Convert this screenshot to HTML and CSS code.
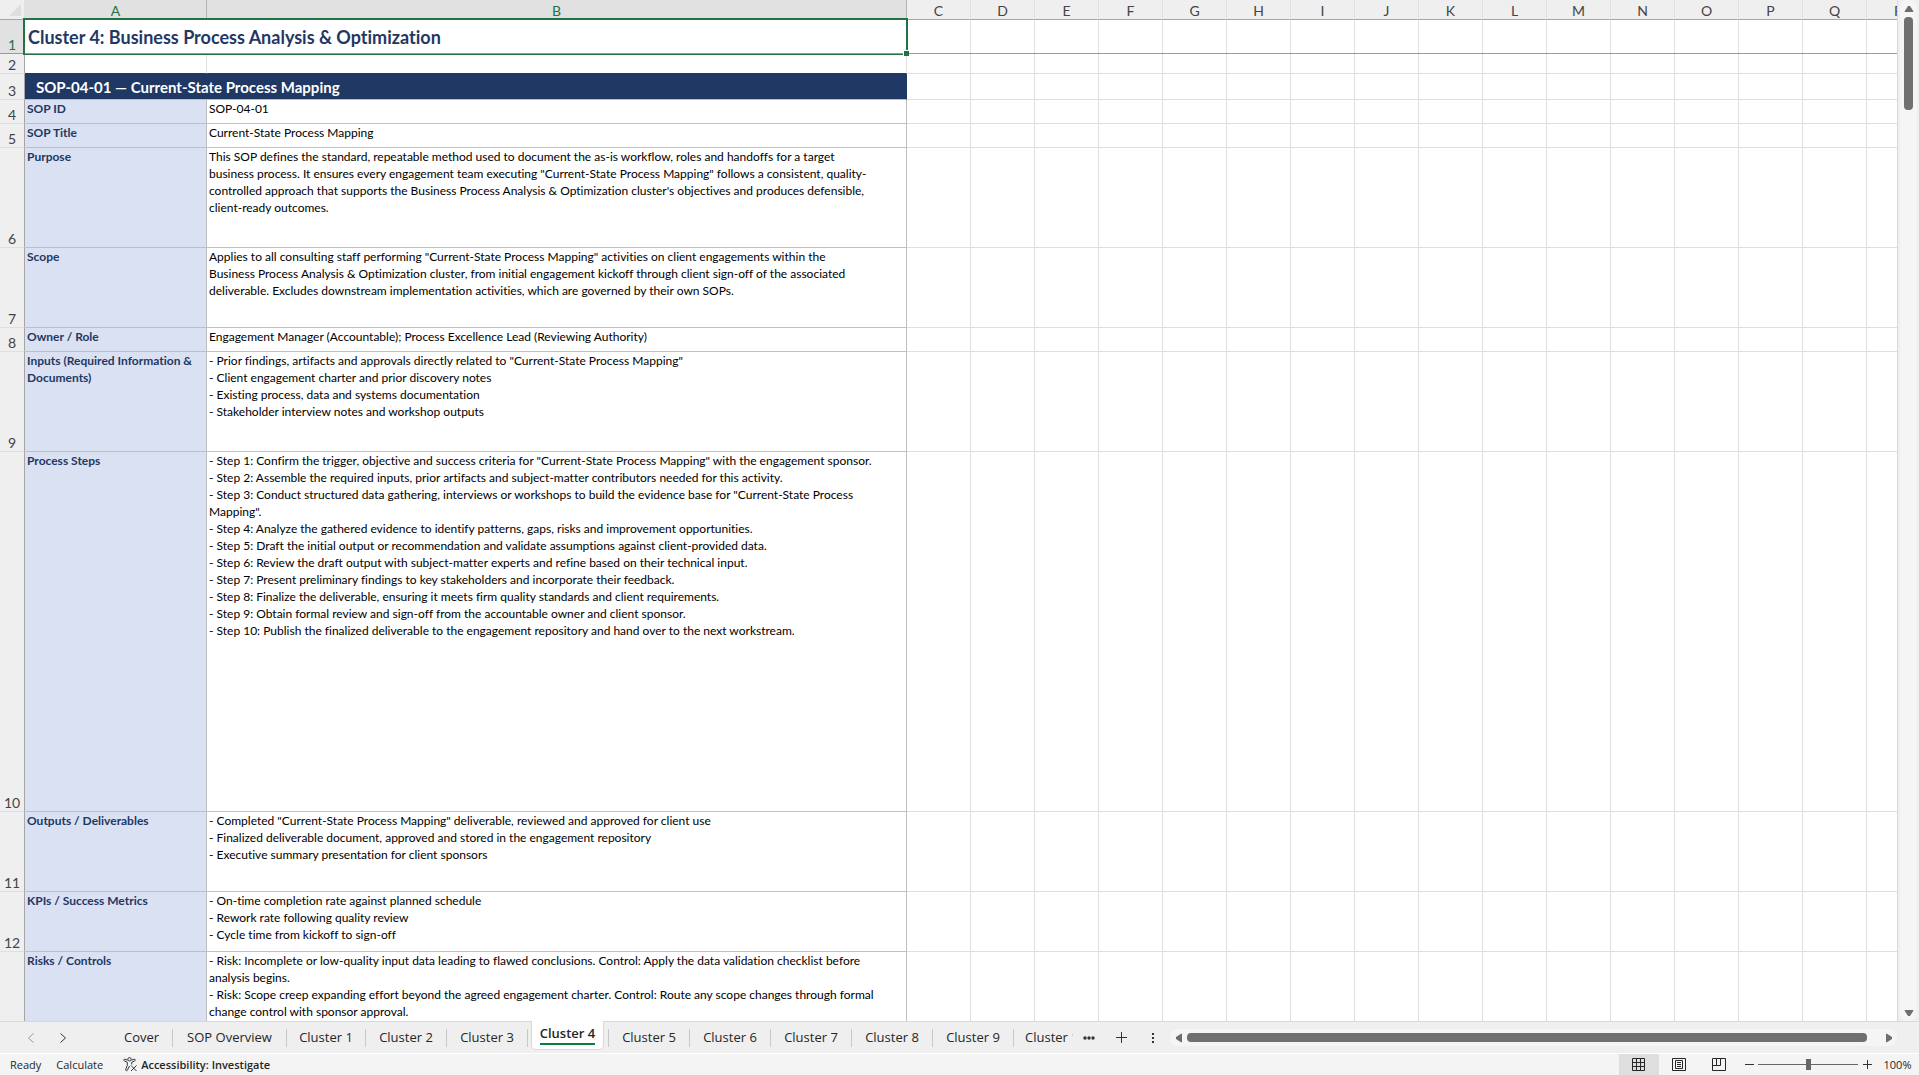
FILE: index.html
```html
<!DOCTYPE html>
<html lang="en">
<head>
<meta charset="utf-8">
<meta name="viewport" content="width=device-width, initial-scale=1.0">
<title>Cluster 4</title>
<link rel="stylesheet" href="styles.css">
</head>
<body>

<main class="workspace">
  <div class="sheet">
    <table class="grid">
      <colgroup>
        <col class="col-num">
        <col class="col-a">
        <col class="col-b">
        <col class="col-std" span="16">
      </colgroup>
      <thead>
        <tr>
          <th class="corner"><svg width="12" height="12" viewBox="0 0 12 12"><path d="M12 0v12H0z" fill="#dedede"/></svg></th>
          <th class="on">A</th><th class="on">B</th>
          <th>C</th><th>D</th><th>E</th><th>F</th><th>G</th><th>H</th><th>I</th><th>J</th>
          <th>K</th><th>L</th><th>M</th><th>N</th><th>O</th><th>P</th><th>Q</th><th>R</th>
        </tr>
      </thead>
      <tbody>
        <tr class="row-title frozen">
          <th class="on">1</th>
          <td class="title selected" colspan="2">Cluster 4: Business Process Analysis &amp; Optimization<span class="handle"></span></td>
          <td class="empty" colspan="16"></td>
        </tr>
        <tr class="row-gap">
          <th>2</th><td></td><td></td><td class="empty" colspan="16"></td>
        </tr>
        <tr class="row-heading">
          <th>3</th>
          <td class="heading" colspan="2">SOP-04-01 — Current-State Process Mapping</td>
          <td class="empty" colspan="16"></td>
        </tr>
        <tr class="row-line">
          <th>4</th>
          <td class="label">SOP ID</td>
          <td class="text">SOP-04-01</td>
          <td class="empty" colspan="16"></td>
        </tr>
        <tr class="row-line">
          <th>5</th>
          <td class="label">SOP Title</td>
          <td class="text">Current-State Process Mapping</td>
          <td class="empty" colspan="16"></td>
        </tr>
        <tr class="row-large">
          <th>6</th>
          <td class="label">Purpose</td>
          <td class="text">This SOP defines the standard, repeatable method used to document the as-is workflow, roles and handoffs for a target<br>
            business process. It ensures every engagement team executing "Current-State Process Mapping" follows a consistent, quality-<br>
            controlled approach that supports the Business Process Analysis &amp; Optimization cluster's objectives and produces defensible,<br>
            client-ready outcomes.</td>
          <td class="empty" colspan="16"></td>
        </tr>
        <tr class="row-medium">
          <th>7</th>
          <td class="label">Scope</td>
          <td class="text">Applies to all consulting staff performing "Current-State Process Mapping" activities on client engagements within the<br>
            Business Process Analysis &amp; Optimization cluster, from initial engagement kickoff through client sign-off of the associated<br>
            deliverable. Excludes downstream implementation activities, which are governed by their own SOPs.</td>
          <td class="empty" colspan="16"></td>
        </tr>
        <tr class="row-line">
          <th>8</th>
          <td class="label">Owner / Role</td>
          <td class="text">Engagement Manager (Accountable); Process Excellence Lead (Reviewing Authority)</td>
          <td class="empty" colspan="16"></td>
        </tr>
        <tr class="row-large">
          <th>9</th>
          <td class="label">Inputs (Required Information &amp;<br>Documents)</td>
          <td class="text">- Prior findings, artifacts and approvals directly related to "Current-State Process Mapping"<br>
            - Client engagement charter and prior discovery notes<br>
            - Existing process, data and systems documentation<br>
            - Stakeholder interview notes and workshop outputs</td>
          <td class="empty" colspan="16"></td>
        </tr>
        <tr class="row-steps">
          <th>10</th>
          <td class="label">Process Steps</td>
          <td class="text">- Step 1: Confirm the trigger, objective and success criteria for "Current-State Process Mapping" with the engagement sponsor.<br>
            - Step 2: Assemble the required inputs, prior artifacts and subject-matter contributors needed for this activity.<br>
            - Step 3: Conduct structured data gathering, interviews or workshops to build the evidence base for "Current-State Process<br>
            Mapping".<br>
            - Step 4: Analyze the gathered evidence to identify patterns, gaps, risks and improvement opportunities.<br>
            - Step 5: Draft the initial output or recommendation and validate assumptions against client-provided data.<br>
            - Step 6: Review the draft output with subject-matter experts and refine based on their technical input.<br>
            - Step 7: Present preliminary findings to key stakeholders and incorporate their feedback.<br>
            - Step 8: Finalize the deliverable, ensuring it meets firm quality standards and client requirements.<br>
            - Step 9: Obtain formal review and sign-off from the accountable owner and client sponsor.<br>
            - Step 10: Publish the finalized deliverable to the engagement repository and hand over to the next workstream.</td>
          <td class="empty" colspan="16"></td>
        </tr>
        <tr class="row-medium">
          <th>11</th>
          <td class="label">Outputs / Deliverables</td>
          <td class="text">- Completed "Current-State Process Mapping" deliverable, reviewed and approved for client use<br>
            - Finalized deliverable document, approved and stored in the engagement repository<br>
            - Executive summary presentation for client sponsors</td>
          <td class="empty" colspan="16"></td>
        </tr>
        <tr class="row-small">
          <th>12</th>
          <td class="label">KPIs / Success Metrics</td>
          <td class="text">- On-time completion rate against planned schedule<br>
            - Rework rate following quality review<br>
            - Cycle time from kickoff to sign-off</td>
          <td class="empty" colspan="16"></td>
        </tr>
        <tr class="row-last">
          <th>13</th>
          <td class="label">Risks / Controls</td>
          <td class="text">- Risk: Incomplete or low-quality input data leading to flawed conclusions. Control: Apply the data validation checklist before<br>
            analysis begins.<br>
            - Risk: Scope creep expanding effort beyond the agreed engagement charter. Control: Route any scope changes through formal<br>
            change control with sponsor approval.</td>
          <td class="empty" colspan="16"></td>
        </tr>
      </tbody>
    </table>
  </div>
  <div class="vscroll">
    <button class="arrow" aria-label="Scroll up"><svg width="10" height="8" viewBox="0 0 10 8"><path d="M4 1h2l3.500 5.500-.5.5H1l-.5-.5z"/></svg></button>
    <div class="vtrack"><div class="vthumb"></div></div>
    <button class="arrow" aria-label="Scroll down"><svg width="10" height="8" viewBox="0 0 10 8"><path d="M4 7h2l3.500-5.500L9 1H1l-.5.5z"/></svg></button>
  </div>
</main>

<div class="tabbar">
  <div class="tabnav">
    <button class="off" aria-label="Previous sheet"><svg width="8" height="10" viewBox="0 0 8 10"><path d="M6.500 .5L1.500 5l5 4.500"/></svg></button>
    <button aria-label="Next sheet"><svg width="8" height="10" viewBox="0 0 8 10"><path d="M1.500 .5L6.500 5l-5 4.500"/></svg></button>
  </div>
  <nav class="tabs">
    <button class="tab tab-cover">Cover</button>
    <button class="tab tab-wide">SOP Overview</button>
    <button class="tab tab-first">Cluster 1</button>
    <button class="tab">Cluster 2</button>
    <button class="tab">Cluster 3</button>
    <button class="tab active"><span>Cluster 4</span></button>
    <button class="tab">Cluster 5</button>
    <button class="tab">Cluster 6</button>
    <button class="tab">Cluster 7</button>
    <button class="tab">Cluster 8</button>
    <button class="tab">Cluster 9</button>
    <button class="tab tab-cut">Cluster 10</button>
  </nav>
  <button class="tool" aria-label="More sheets"><svg width="12" height="4" viewBox="0 0 12 4"><circle cx="2" cy="2" r="1.700"/><circle cx="6" cy="2" r="1.700"/><circle cx="10" cy="2" r="1.700"/></svg></button>
  <button class="tool" aria-label="New sheet"><svg width="11" height="11" viewBox="0 0 11 11"><path d="M5 0h1v5h5v1H6v5H5V6H0V5h5z"/></svg></button>
  <button class="tool" aria-label="Resize"><svg width="2" height="10" viewBox="0 0 2 10"><path d="M0 0h2v2H0zM0 4h2v2H0zM0 8h2v2H0z"/></svg></button>
  <div class="hscroll">
    <button class="arrow" aria-label="Scroll left"><svg width="8" height="10" viewBox="0 0 8 10"><path d="M1 4v2l5.500 3.500.5-.5V1L6.500.5z"/></svg></button>
    <div class="htrack"><div class="hthumb"></div></div>
    <button class="arrow" aria-label="Scroll right"><svg width="8" height="10" viewBox="0 0 8 10"><path d="M7 4v2L1.500 9.500 1 9V1l.5-.5z"/></svg></button>
  </div>
</div>

<footer class="status">
  <span class="ready">Ready</span>
  <button class="calc">Calculate</button>
  <button class="access">
    <svg width="15" height="15" viewBox="0 0 15 15" fill="none" stroke="#333">
      <circle cx="6.500" cy="2.300" r="1.700"/>
      <path d="M4.500 3.200L2 2.200c-1-.4-1.700 1.200-.7 1.700L4.300 5.300v3L2.700 12.500c-.4 1.200 1.200 1.800 1.700.7L6.500 9M8.500 3.200l2.600-1c1-.4 1.700 1.200.7 1.700L8.700 5.300v2.200"/>
      <path d="M8 8.500l5.500 5.500M13.500 8.500L8 14"/>
    </svg>
    Accessibility: Investigate
  </button>
  <div class="views">
    <button class="view current" aria-label="Normal"><svg width="14" height="14" viewBox="0 0 14 14"><path d="M.5.5h12v12H.5zM.5 4.500h12M.5 8.500h12M4.500.5v12M8.500.5v12"/></svg></button>
    <button class="view" aria-label="Page layout"><svg width="14" height="14" viewBox="0 0 14 14"><path d="M.5.500h13v12H.5zM3.500 2.500h7v8h-7zM5 4.500h4M5 6.500h4M5 8.500h4"/></svg></button>
    <button class="view" aria-label="Page break preview"><svg width="14" height="14" viewBox="0 0 14 14"><path d="M.5.500h13v12H.5zM.5 7.500h8v-7M4.500.5v7"/></svg></button>
  </div>
  <button class="zoom-step" aria-label="Zoom out"><svg width="9" height="9" viewBox="0 0 9 9"><path d="M0 4.500h9"/></svg></button>
  <input class="zoom" type="range" min="0" max="100" value="50" aria-label="Zoom">
  <button class="zoom-step" aria-label="Zoom in"><svg width="9" height="9" viewBox="0 0 9 9"><path d="M0 4.500h9M4.500 0v9"/></svg></button>
  <button class="percent">100%</button>
</footer>

</body>
</html>
```

FILE: styles.css
```css
* {
  box-sizing: border-box;
}
body {
  margin: 0;
  height: 100vh;
  display: flex;
  flex-direction: column;
  overflow: hidden;
  background: #efefef;
  font-family: "Open Sans", "Noto Sans", sans-serif;
  color: #262626;
}
button {
  border: 0;
  padding: 0;
  background: none;
  font: inherit;
  color: inherit;
  display: flex;
  align-items: center;
  justify-content: center;
}
svg {
  display: block;
  flex: none;
}

/* sheet */
.workspace {
  flex: 1;
  min-height: 0;
  display: flex;
}
.sheet {
  flex: 1;
  min-width: 0;
  overflow: hidden;
  background: #fff;
  border-right: 1px solid #d9d9d9;
}
.grid {
  width: 1931px;
  table-layout: fixed;
  border-collapse: separate;
  border-spacing: 0;
  font-family: Lato, sans-serif;
  font-variant-ligatures: none;
}
.col-num {
  width: 25px;
}
.col-a {
  width: 182px;
}
.col-b {
  width: 700px;
}
.col-std {
  width: 64px;
}
.grid th,
.grid td {
  padding: 0;
  border-right: 1px solid #dfdfdf;
  border-bottom: 1px solid #dfdfdf;
  white-space: nowrap;
}
.grid th {
  background: #efefef;
  color: #444;
  font-size: 14px;
  font-weight: 400;
  line-height: 16px;
}
.grid thead th {
  height: 20px;
  border-bottom-color: #a6a6a6;
  vertical-align: bottom;
}
.grid tbody th {
  border-right-color: #a6a6a6;
  vertical-align: bottom;
}
.grid th.on {
  background: #e1e1e1;
  color: #217346;
  border-right-color: #b5b5b5;
}
.corner svg {
  margin: 0 3px 3px auto;
}
.grid td.empty {
  border-right: 0;
  background: repeating-linear-gradient(to right, transparent 0 63px, #dfdfdf 63px 64px);
}
.row-title {
  height: 34px;
}
.row-gap {
  height: 20px;
}
.row-heading {
  height: 26px;
}
.row-line {
  height: 24px;
}
.row-small {
  height: 60px;
}
.row-medium {
  height: 80px;
}
.row-large,
.row-last {
  height: 100px;
}
.row-steps {
  height: 360px;
}
.grid .frozen th,
.grid .frozen td {
  border-bottom-color: #9b9b9b;
}
.row-gap td:not(.empty) {
  border-bottom-color: #1f3864;
}
.grid .title {
  padding-left: 3px;
  color: #1f3864;
  font-size: 18px;
  font-weight: 700;
}
.selected {
  position: relative;
}
.selected::after {
  content: "";
  position: absolute;
  inset: -2px -2px -2px -2px;
  border: 2px solid #217346;
  border-bottom-width: 1px;
}
.handle {
  position: absolute;
  right: -3px;
  bottom: -3px;
  width: 6px;
  height: 6px;
  z-index: 1;
  border: 1px solid #fff;
  border-width: 1px 0 0 1px;
  background: #217346;
}
.grid .heading {
  padding-left: 11px;
  border-color: #1f3864;
  border-bottom-color: #bfbfbf;
  background: #1f3864;
  color: #fff;
  font-size: 15px;
  font-weight: 700;
}
.grid .label,
.grid .text {
  padding: 0 2px;
  border-color: #bfbfbf;
  vertical-align: top;
  font-size: 12px;
  line-height: 17px;
}
.grid .label {
  background: #d9e1f2;
  color: #1f3864;
  font-weight: 700;
}
.grid .text {
  color: #000;
}

/* scroll bars */
.arrow {
  flex: none;
  fill: #6e6e6e;
}
.vscroll {
  width: 17px;
  margin: 0 2px;
  display: flex;
  flex-direction: column;
  border-radius: 8px;
  background: #f5f5f5;
}
.vscroll .arrow {
  height: 17px;
}
.vtrack {
  flex: 1;
  display: flex;
  justify-content: center;
}
.vthumb {
  width: 9px;
  height: 93px;
  border-radius: 4px;
  background: #707070;
}
.hscroll {
  flex: 1;
  height: 17px;
  margin: 0 22px 0 1px;
  display: flex;
  border-radius: 8px;
  background: #f5f5f5;
}
.hscroll .arrow {
  width: 17px;
}
.htrack {
  flex: 1;
  display: flex;
  align-items: center;
  padding-right: 13px;
}
.hthumb {
  flex: 1;
  height: 9px;
  border-radius: 4px;
  background: #707070;
}

/* sheet tabs */
.tabbar {
  height: 32px;
  display: flex;
  align-items: center;
  border-top: 1px solid #d9d9d9;
}
.tabnav {
  width: 111px;
  padding-left: 15px;
  display: flex;
}
.tabnav button {
  width: 32px;
  height: 24px;
  fill: none;
  stroke: #333;
}
.tabnav .off {
  stroke: #999;
}
.tabs {
  align-self: stretch;
  display: flex;
  align-items: center;
}
.tab {
  width: 81px;
  height: 18px;
  padding-bottom: 2px;
  border-right: 1px solid #c8c8c8;
  font-size: 13px;
  white-space: nowrap;
}
.tab-cover {
  width: 62px;
}
.tab-wide {
  width: 114px;
}
.tab-first {
  width: 79px;
}
.tab-cut {
  width: 59px;
  padding-left: 11px;
  border-right: 0;
  justify-content: flex-start;
  overflow: hidden;
}
.tab.active {
  width: 73px;
  height: 29px;
  margin: -1px 4px 0 3px;
  align-self: flex-start;
  border: 1px solid #d9d9d9;
  border-top: 0;
  border-radius: 0 0 5px 5px;
  background: #fff;
  font-weight: 600;
}
.active + .tab {
  width: 82px;
  border-left: 1px solid #c8c8c8;
}
.active span {
  line-height: 20px;
  border-bottom: 2px solid #107c41;
}
.tool {
  width: 32px;
  height: 24px;
  fill: #333;
}

/* status bar */
.status {
  height: 22px;
  display: flex;
  align-items: center;
  border-top: 1px solid #fff;
  background: #f4f4f4;
  font-size: 11px;
}
.ready {
  margin: 0 15px 0 10px;
}
.access {
  gap: 3px;
  margin-left: 20px;
  font-weight: 600;
}
.views {
  align-self: stretch;
  display: flex;
  margin: 0 1px 0 auto;
}
.view {
  width: 40px;
  fill: none;
  stroke: #262626;
}
.view.current {
  background: #dedede;
}
.zoom-step {
  width: 18px;
  height: 20px;
  fill: none;
  stroke: #333;
}
.zoom {
  appearance: none;
  width: 100px;
  height: 12px;
  margin: 0;
  background: linear-gradient(#666, #666) center / 100% 1px no-repeat;
}
.zoom::-webkit-slider-thumb {
  appearance: none;
  width: 5px;
  height: 11px;
  background: #666;
}
.percent {
  width: 43px;
}
```
